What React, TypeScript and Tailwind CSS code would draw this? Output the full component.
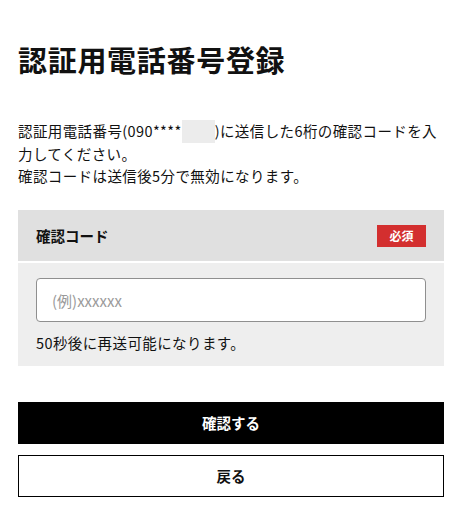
export default function App() {
  return (
    <div
      className="min-h-[530px] bg-white px-[18px] pt-[39px] text-[#111]"
      style={{ fontFamily: '"Noto Sans CJK JP", "Noto Sans", sans-serif' }}
    >
      <h1 className="text-[29px] font-bold leading-[40px] tracking-[0.7px]">認証用電話番号登録</h1>

      <p className="mt-[41px] text-[14.5px] leading-[22px] tracking-[0.4px]">
        認証用電話番号(090****
        <span className="inline-block h-[23px] w-[33px] bg-[#ececec] align-[-6px]" />
        )に送信した6桁の確認コードを入力してください。
        <br />
        確認コードは送信後5分で無効になります。
      </p>

      <section className="mt-[23px]">
        <div className="flex h-[51px] items-center justify-between bg-[#e0e0e0] px-[18px]">
          <span className="text-[14.5px] font-bold">確認コード</span>
          <span className="flex h-[22px] w-[49px] items-center justify-center bg-[#d32f2f] text-[12px] font-bold text-white">
            必須
          </span>
        </div>
        <div className="mt-[2px] bg-[#eeeeee] px-[18px] pb-[12px] pt-[15px]">
          <input
            type="text"
            placeholder="(例)xxxxxx"
            className="block h-[44px] w-full rounded-[4px] border border-[#8f8f8f] bg-white px-[15px] text-[15px] outline-none placeholder:text-[#9a9a9a]"
          />
          <p className="mt-[10px] text-[14.5px] leading-[22px] tracking-[0.4px]">50秒後に再送可能になります。</p>
        </div>
      </section>

      <button className="mt-[36px] flex h-[42px] w-full items-center justify-center bg-black text-[14.5px] font-bold text-white">
        確認する
      </button>
      <button className="mt-[11px] flex h-[42px] w-full items-center justify-center border border-black bg-white text-[14.5px] font-bold text-[#111]">
        戻る
      </button>
    </div>
  );
}
